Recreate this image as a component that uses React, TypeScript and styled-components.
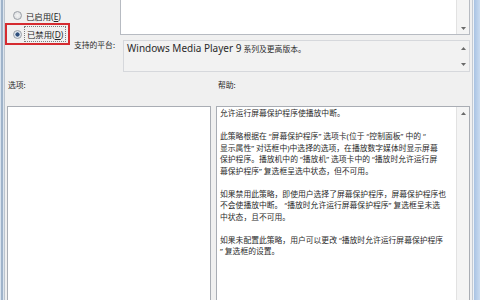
import styled, { createGlobalStyle } from "styled-components";

const GlobalStyle = createGlobalStyle`
  html, body {
    margin: 0;
    padding: 0;
    background: #f0f0f0;
  }
  body {
    font-family: "Noto Sans", "Noto Sans CJK SC", sans-serif;
    color: #222;
  }
`;

const Arrow = ({ up }: { up?: boolean }) => (
  <svg width="5" height="3" viewBox="0 0 5 3">
    <polygon points={up ? "0,3 2.5,0 5,3" : "0,0 5,0 2.5,3"} fill="#6a6a6a" />
  </svg>
);

const App = () => {
  return (
    <>
      <GlobalStyle />
      <Page>
        <FrameLeft />
        <Dialog>
          <TopGrid>
            <RadioGroup>
              <Radio>
                <RadioDot />
                <span>
                  已启用(<u>E</u>)
                </span>
              </Radio>
              <Highlight>
                <Radio>
                  <RadioDot checked />
                  <Focused>
                    已禁用(<u>D</u>)
                  </Focused>
                </Radio>
              </Highlight>
            </RadioGroup>

            <CommentBox>
              <TextArea />
              <ScrollTrack $align="flex-end">
                <Arrow />
              </ScrollTrack>
            </CommentBox>

            <PlatformLabel>支持的平台:</PlatformLabel>
            <PlatformBox>
              <PlatformText>
                <Latin>Windows Media Player 9</Latin> 系列及更高版本。
              </PlatformText>
              <PlatformArrows>
                <Arrow up />
                <Arrow />
              </PlatformArrows>
            </PlatformBox>
          </TopGrid>

          <SectionLabels>
            <span>选项:</span>
            <span>帮助:</span>
          </SectionLabels>

          <BottomGrid>
            <OptionsBox />
            <HelpBox>
              <HelpText>
                <p>允许运行屏幕保护程序使播放中断。</p>
                <p>
                  此策略根据在 “屏幕保护程序” 选项卡(位于 “控制面板” 中的 “
                  <br />
                  显示属性” 对话框中)中选择的选项，在播放数字媒体时显示屏幕
                  <br />
                  保护程序。播放机中的 “播放机” 选项卡中的 “播放时允许运行屏
                  <br />
                  幕保护程序” 复选框呈选中状态，但不可用。
                </p>
                <p>
                  如果禁用此策略，即使用户选择了屏幕保护程序，屏幕保护程序也
                  <br />
                  不会使播放中断。 “播放时允许运行屏幕保护程序” 复选框呈未选
                  <br />
                  中状态，且不可用。
                </p>
                <p>
                  如果未配置此策略，用户可以更改 “播放时允许运行屏幕保护程序
                  <br />” 复选框的设置。
                </p>
              </HelpText>
              <ScrollTrack $align="flex-start">
                <Arrow up />
              </ScrollTrack>
            </HelpBox>
          </BottomGrid>
        </Dialog>
        <FrameRight />
      </Page>
    </>
  );
};

const Page = styled.div`
  display: flex;
  width: 480px;
  height: 300px;
  overflow: hidden;
  font-size: 7.8px;
`;

const FrameLeft = styled.div`
  width: 5px;
  background: linear-gradient(
    to right,
    #d9e3ee 0 1px,
    #9fb3ca 1px 3px,
    #dde5ee 3px 4px,
    #bcc4cd 4px 5px
  );
`;

const FrameRight = styled.div`
  width: 8px;
  background: linear-gradient(
    to right,
    #c3cad3 0 1px,
    #eef2f6 1px 2px,
    #a9c3e3 2px,
    #c9dbf0 8px
  );
`;

const Dialog = styled.main`
  flex: 1;
  display: flex;
  flex-direction: column;
  background: #f0f0f0;
  min-width: 0;
`;

const TopGrid = styled.section`
  display: grid;
  grid-template-columns: 67px 48px 1fr;
  grid-template-rows: 35px 32px;
  row-gap: 5px;
  padding-right: 2px;
`;

const RadioGroup = styled.div`
  grid-column: 1;
  grid-row: 1 / span 2;
  display: flex;
  flex-direction: column;
  gap: 2px;
  padding-top: 10px;
`;

const Radio = styled.label`
  display: flex;
  align-items: center;
  gap: 4px;
  height: 11px;
  padding-left: 8px;
  white-space: nowrap;
  font-size: 8.4px;
  color: #262626;

  u {
    text-decoration-thickness: 0.5px;
    text-underline-offset: 1px;
  }
`;

const RadioDot = styled.span<{ checked?: boolean }>`
  width: 7px;
  height: 7px;
  border-radius: 50%;
  border: 1px solid #9a9fa6;
  background: ${(p) =>
    p.checked
      ? "radial-gradient(circle, #2f4f7c 0 1.8px, #dfe6ee 2.4px)"
      : "radial-gradient(circle, #f4f4f4, #d6d9dd)"};
  flex-shrink: 0;
`;

const Highlight = styled.div`
  width: 65px;
  height: 22px;
  box-sizing: border-box;
  border: 2px solid #d52b30;
  display: flex;
  align-items: center;

  ${Radio} {
    padding-left: 6px;
  }
`;

const Focused = styled.span`
  outline: 1px dotted #7d7d7d;
  outline-offset: 1px;
  padding: 0 1px;
`;

const CommentBox = styled.div`
  grid-column: 3;
  grid-row: 1;
  display: flex;
  background: #fff;
  border: 1px solid #b7bbc2;
  border-top: none;
`;

const TextArea = styled.div`
  flex: 1;
`;

const ScrollTrack = styled.div<{ $align: string }>`
  width: 12px;
  display: flex;
  flex-direction: column;
  align-items: center;
  justify-content: ${(p) => p.$align};
  padding: 5px 0 4px;
  background: #f4f4f4;
  border-left: 1px solid #e2e2e2;
`;

const PlatformLabel = styled.span`
  grid-column: 2;
  grid-row: 2;
  justify-self: end;
  padding-right: 5px;
  line-height: 10px;
  white-space: nowrap;
  color: #2a2a2a;
`;

const PlatformBox = styled.div`
  grid-column: 3;
  grid-row: 2;
  margin-left: 3px;
  display: flex;
  background: #f2f2f2;
  border: 1px solid #d6d8dc;
`;

const PlatformText = styled.div`
  flex: 1;
  padding: 1px 0 0 3px;
  line-height: 12px;
  white-space: nowrap;
  color: #2a2a2a;
`;

const Latin = styled.span`
  font-size: 10px;
`;

const PlatformArrows = styled.div`
  width: 12px;
  display: flex;
  flex-direction: column;
  align-items: center;
  justify-content: space-between;
  padding: 6px 0 5px;
`;

const SectionLabels = styled.div`
  display: grid;
  grid-template-columns: 204px 1fr;
  column-gap: 5px;
  margin-top: 8px;
  padding-left: 3px;
  line-height: 10px;
  color: #2a2a2a;

  span:last-child {
    padding-left: 1px;
  }
`;

const BottomGrid = styled.section`
  flex: 1;
  display: grid;
  grid-template-columns: 204px 1fr;
  column-gap: 5px;
  margin-top: 16px;
  padding: 0 2px;
  min-height: 0;
`;

const OptionsBox = styled.div`
  background: #fff;
  border: 1px solid #a9adb4;
  border-bottom: none;
`;

const HelpBox = styled.div`
  display: flex;
  background: #fff;
  border: 1px solid #a9adb4;
  border-bottom: none;
  min-width: 0;
`;

const HelpText = styled.div`
  flex: 1;
  padding: 1px 3px;
  line-height: 11.5px;
  white-space: nowrap;
  color: #2b2b2b;

  p {
    margin: 0 0 11.5px;
  }
`;

export default App;
